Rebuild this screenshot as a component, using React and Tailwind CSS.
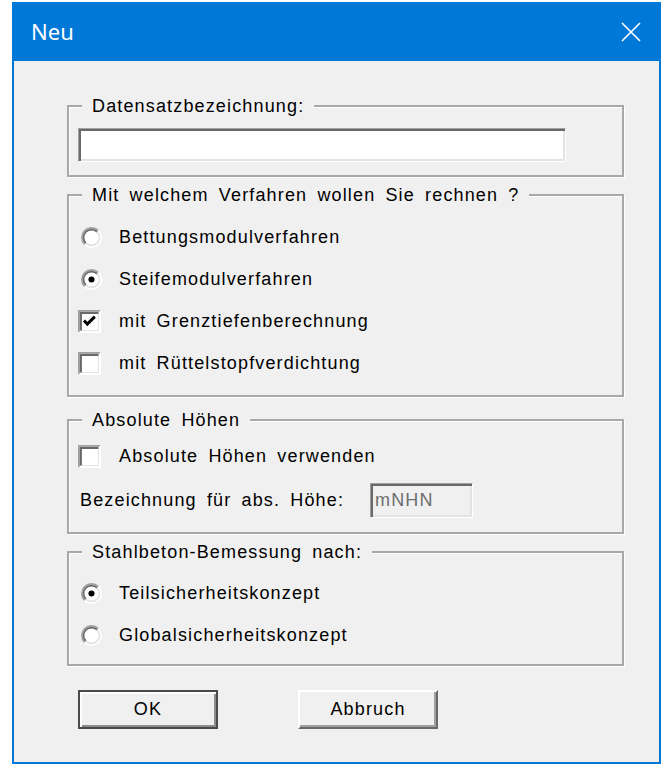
import React from "react";

function Radio({ checked }) {
  const c = 10;
  const arc = (r, first, color) => {
    const k = r * 0.7071;
    const bl = `${c - k} ${c + k}`;
    const tr = `${c + k} ${c - k}`;
    const d = first ? `M ${bl} A ${r} ${r} 0 0 1 ${tr}` : `M ${tr} A ${r} ${r} 0 0 1 ${bl}`;
    return <path d={d} stroke={color} strokeWidth="1.6" fill="none" />;
  };
  return (
    <svg width="21" height="21" viewBox="0 0 20 20">
      <circle cx="10" cy="10" r="8" fill="#ffffff" />
      {arc(9.2, true, "#a0a0a0")}
      {arc(9.2, false, "#ffffff")}
      {arc(7.6, true, "#696969")}
      {arc(7.6, false, "#e3e3e3")}
      {checked && <circle cx="10" cy="10" r="2.9" fill="#000" />}
    </svg>
  );
}

function Check({ checked }) {
  return (
    <svg width="23" height="23" viewBox="0 0 23 23">
      <rect x="0" y="0" width="23" height="23" fill="#ffffff" />
      <rect x="1.5" y="1.5" width="19" height="19" fill="#ffffff" stroke="#e3e3e3" strokeWidth="1" />
      <path d="M0.8 22.2 V0.8 H22.2" stroke="#a0a0a0" strokeWidth="1.6" fill="none" />
      <path d="M2.8 20.4 V2.8 H20.4" stroke="#696969" strokeWidth="2.2" fill="none" />
      {checked && (
        <path d="M6 10.5 L9.3 14 L16.8 6.6" stroke="#000" strokeWidth="3" fill="none" />
      )}
    </svg>
  );
}

function Row({ control, children }) {
  return (
    <div className="flex items-center h-[42px]">
      <div className="w-[24px] flex items-center">{control}</div>
      <span className="ml-[17px]">{children}</span>
    </div>
  );
}

function Group({ title, className, children }) {
  return (
    <fieldset
      className={
        "w-[557px] border-2 border-[#a8a8a8] pl-[9px] shadow-[1px_1px_0_#ffffff,inset_1px_1px_0_#ffffff] " +
        (className || "")
      }
    >
      <legend className="ml-[4px] px-[10px] leading-[26px] bg-[#f0f0f0]">{title}</legend>
      {children}
    </fieldset>
  );
}

export default function App() {
  return (
    <div className="bg-white w-[672px] h-[778px] pt-[2px] pl-[12px] font-['Liberation_Sans',Arial,sans-serif] text-[18px] tracking-[1.15px] [word-spacing:4px] text-black">
      <div className="w-[649px] h-[762px] bg-[#0078d7] flex flex-col">
        <div className="h-[59px] pl-[19px] pr-[20px] flex items-center justify-between text-white">
          <span className="font-['Noto_Sans',sans-serif] text-[22px] tracking-normal [word-spacing:0px]">Neu</span>
          <svg width="20" height="20" viewBox="0 0 20 20">
            <path d="M1 1 L19 19 M19 1 L1 19" stroke="#ffffff" strokeWidth="1.6" fill="none" />
          </svg>
        </div>
        <div className="mx-[2px] mb-[2px] flex-1 bg-[#f0f0f0] pl-[53px] pt-[32px]">
          <Group title="Datensatzbezeichnung:" className="pt-[9px] pb-[13px]">
            <div className="w-[488px] h-[34px] bg-white border border-t-[#a0a0a0] border-l-[#a0a0a0] border-b-white border-r-white shadow-[inset_2px_2px_0_#696969,inset_-2px_-2px_0_#e3e3e3]" />
          </Group>

          <Group title="Mit welchem Verfahren wollen Sie rechnen ?" className="mt-[5px] pt-[8px] pb-[11px]">
            <Row control={<div className="pl-[3px]"><Radio /></div>}>Bettungsmodulverfahren</Row>
            <Row control={<div className="pl-[3px]"><Radio checked /></div>}>Steifemodulverfahren</Row>
            <Row control={<Check checked />}>mit Grenztiefenberechnung</Row>
            <Row control={<Check />}>mit Rüttelstopfverdichtung</Row>
          </Group>

          <Group title="Absolute Höhen" className="mt-[10px] pt-[2px] pb-[14px]">
            <Row control={<Check />}>Absolute Höhen verwenden</Row>
            <div className="mt-[6px] flex items-center h-[35px]">
              <span className="pl-[2px]">Bezeichnung für abs. Höhe:</span>
              <div className="ml-auto mr-[149px] w-[103px] h-[35px] bg-[#f0f0f0] border border-t-[#a0a0a0] border-l-[#a0a0a0] border-b-white border-r-white shadow-[inset_2px_2px_0_#696969,inset_-2px_-2px_0_#e3e3e3] flex items-center pl-[4px] text-[#6d6d6d]">
                mNHN
              </div>
            </div>
          </Group>

          <Group title="Stahlbeton-Bemessung nach:" className="mt-[5px] pt-[7px] pb-[8px]">
            <Row control={<div className="pl-[3px]"><Radio checked /></div>}>Teilsicherheitskonzept</Row>
            <Row control={<div className="pl-[3px]"><Radio /></div>}>Globalsicherheitskonzept</Row>
          </Group>

          <div className="flex mt-[24px] pl-[11px]">
            <button className="w-[140px] h-[39px] bg-[#f0f0f0] border-2 border-[#4a4a4a] shadow-[inset_2px_2px_0_#ffffff,inset_-2px_-2px_0_#8c8c8c] flex items-center justify-center">
              OK
            </button>
            <button className="ml-[80px] w-[140px] h-[39px] bg-[#f0f0f0] border-2 border-t-[#ffffff] border-l-[#ffffff] border-b-[#696969] border-r-[#696969] shadow-[inset_-2px_-2px_0_#a0a0a0] flex items-center justify-center">
              Abbruch
            </button>
          </div>
        </div>
      </div>
    </div>
  );
}
